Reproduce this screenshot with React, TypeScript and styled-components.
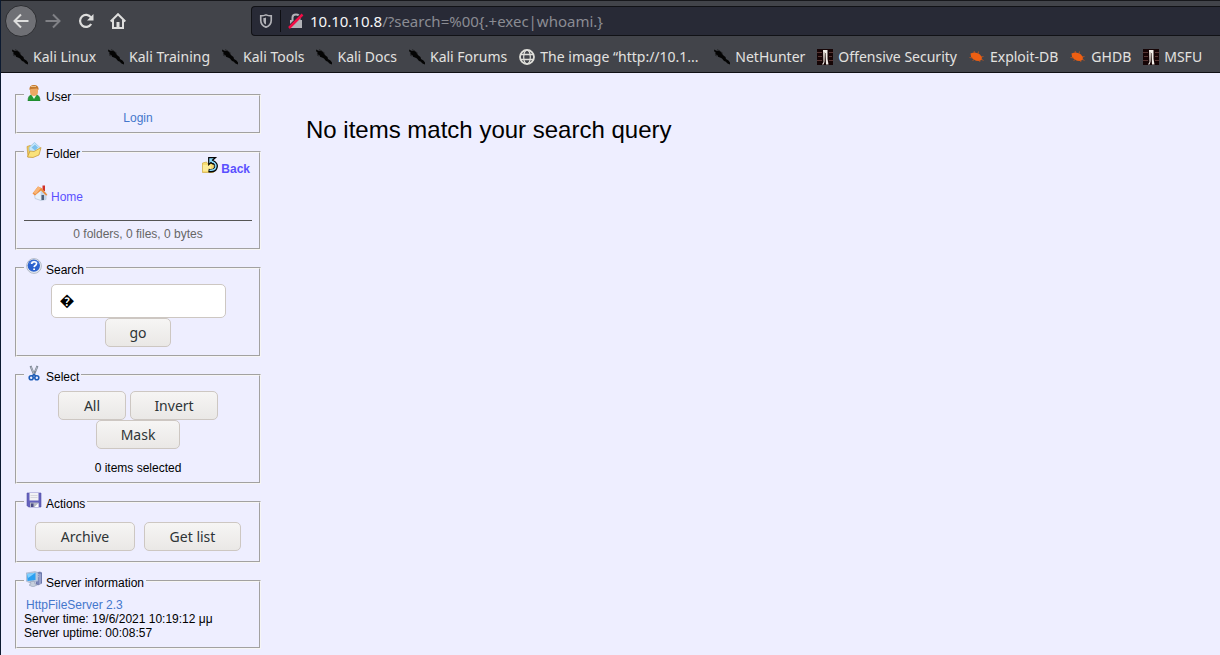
import React from "react";
import styled, { createGlobalStyle } from "styled-components";

const GlobalStyle = createGlobalStyle`
  * { box-sizing: border-box; }
  body {
    margin: 0;
    background: #eeeeff;
    color: #000;
    font: 12px/14px "Liberation Sans", Arial, sans-serif;
  }
  a { color: #4477cc; text-decoration: none; }
`;

const uiFont = `"Noto Sans", "Open Sans", sans-serif`;

const Window = styled.div`
  min-height: 100vh;
  border-left: 1px solid #0c1a30;
  overflow: hidden;
`;

const Chrome = styled.header`
  background: #42444a;
  border-top: 1px solid #17181c;
  border-bottom: 1px solid #0f1014;
  font-family: ${uiFont};
`;

const NavBar = styled.div`
  display: flex;
  align-items: center;
  height: 40px;
  padding-left: 4px;
`;

const NavButton = styled.button<{ $round?: boolean }>`
  display: grid;
  place-items: center;
  flex: none;
  width: 32px;
  height: 32px;
  padding: 0;
  border: 1px solid ${(p) => (p.$round ? "#2c2d31" : "transparent")};
  border-radius: 50%;
  background: ${(p) => (p.$round ? "#6f7075" : "none")};
  color: #dededd;
  &:disabled { color: #808186; }
`;

const NavButtons = styled.div`
  display: flex;
  flex: none;
  width: 129px;
  justify-content: space-between;
`;

const Address = styled.div`
  display: flex;
  align-items: center;
  flex: 1;
  height: 30px;
  margin-left: 117px;
  padding-left: 7px;
  border: 1px solid #111216;
  border-right: 0;
  border-radius: 4px 0 0 4px;
  background: #282a36;
  font-size: 15px;
  line-height: 20px;
  color: #8b8c93;
  white-space: pre;
`;

const Host = styled.span`
  color: #f6f6f7;
`;

const Divider = styled.span`
  width: 1px;
  height: 22px;
  margin: 0 7px;
  background: #0d0e12;
`;

const LockSlot = styled.span`
  display: flex;
  margin-right: 6px;
`;

const Bookmarks = styled.nav`
  display: flex;
  gap: 12px;
  height: 31px;
  padding: 0 11px;
  align-items: center;
`;

const Bookmark = styled.a`
  display: flex;
  flex: none;
  align-items: center;
  gap: 5px;
  color: #e2e2e0;
  font-size: 14px;
  line-height: 20px;
  white-space: nowrap;
`;

const BookmarkLabel = styled.span<{ $width?: number }>`
  width: ${(p) => (p.$width ? `${p.$width}px` : "auto")};
`;

const Page = styled.div`
  display: flex;
  align-items: flex-start;
`;

const Sidebar = styled.aside`
  display: flex;
  flex-direction: column;
  flex: none;
  gap: 8px;
  width: 246px;
  margin: 12px 0 6px 14px;
`;

const Panel = styled.fieldset`
  min-width: 0;
  margin: 0;
  padding: 0 7px 6px;
  border: 2px groove #f6f5f4;
`;

const PanelTitle = styled.legend`
  display: flex;
  align-items: flex-start;
  gap: 4px;
  height: 20px;
  padding: 0 2px;
  span { padding-top: 5px; }
`;

const Centered = styled.div<{ $top: number }>`
  padding-top: ${(p) => p.$top}px;
  padding-bottom: 1px;
  text-align: center;
`;

const IconLink = styled.a<{ $strong?: boolean }>`
  display: flex;
  align-items: flex-end;
  gap: 3px;
  color: #5a50ff;
  font-weight: ${(p) => (p.$strong ? "bold" : "normal")};
  span { margin-bottom: -3px; }
`;

const BackRow = styled.div`
  display: flex;
  justify-content: flex-end;
  margin-top: -5px;
  padding-right: 2px;
`;

const Trail = styled.div`
  display: flex;
  padding: 12px 8px 19px;
`;

const Summary = styled.div`
  padding: 6px 0 1px;
  border-top: 1px solid #555;
  color: #666;
  text-align: center;
`;

const SearchForm = styled.form`
  display: flex;
  flex-direction: column;
  align-items: center;
  padding: 6px 0 2px;
`;

const SearchInput = styled.input`
  width: 175px;
  height: 34px;
  padding: 0 8px 2px;
  border: 1px solid #cdc7c2;
  border-radius: 5px;
  background: #fff;
  color: #000;
  font: 15px/20px "Noto Sans", "DejaVu Sans", sans-serif;
`;

const Buttons = styled.div<{ $gap: number; $top: number; $bottom?: number }>`
  display: flex;
  flex-wrap: wrap;
  justify-content: center;
  column-gap: ${(p) => p.$gap}px;
  padding: ${(p) => p.$top}px 8px ${(p) => p.$bottom ?? 0}px;
`;

const Button = styled.button<{ $width: number }>`
  width: ${(p) => p.$width}px;
  height: 29px;
  padding: 0;
  border: 1px solid #cdc7c2;
  border-radius: 5px;
  background: linear-gradient(#f6f5f4, #eae8e6);
  color: #2e3436;
  font: 14px/20px ${uiFont};
`;

const ServerInfo = styled.div`
  padding: 7px 0 1px;
  a { margin-left: 2px; }
`;

const Message = styled.h1`
  margin: 43px 0 0 45px;
  font-size: 24px;
  line-height: 28px;
  font-weight: normal;
`;

const Icon = ({ size = 16, children }: { size?: number; children: React.ReactNode }) => (
  <svg width={size} height={size} viewBox="0 0 16 16" fill="none" aria-hidden="true">
    {children}
  </svg>
);

const KaliIcon = () => (
  <Icon>
    <path d="M0 .5l2.500 1.200H5l2 1 1 2L9.500 6.500l2 1.500.5 2 2.500 1.500 2 2.500-.5 1.500-2.500-1-2-2-1.500-.5L8 9.500 6 8.500 4 7.700l-.5-1.500L.8 5 2 4 .3 2.500z" fill="#040404" />
    <path d="M3 .5l3 1.500M7 3l2 1.500M1 6l2 1" stroke="#1c1c1e" strokeWidth=".7" />
  </Icon>
);

const GlobeIcon = () => (
  <Icon>
    <circle cx="8" cy="8" r="7" stroke="#deded9" strokeWidth="1.800" />
    <ellipse cx="8" cy="8" rx="3.300" ry="7" stroke="#deded9" strokeWidth="1.200" />
    <path d="M1.500 5.500h13M1.500 10.500h13" stroke="#deded9" strokeWidth="1.300" />
  </Icon>
);

const OffsecIcon = () => (
  <Icon>
    <path d="M0 0h16v16H0z" fill="#160506" />
    <path d="M0 3.500h5M1 7.500h4M0 11.500h5M12 3.500h4M12 7.500h3M12 11.500h4" stroke="#593634" />
    <path d="M6 1h4.500v9l1 5.500H9L8.500 4H8l-.5 9-1 2.500H5L6.500 13z" fill="#f3efe9" />
    <path d="M7.300 3v9" stroke="#a5978e" strokeWidth=".6" />
  </Icon>
);

const BugIcon = () => (
  <Icon>
    <path d="M1.500 4.500L4.500 3.500 8 4l3 1.500 2 3-.5 2.500-2.500 1-3-.3L4 10 2 7.500z" fill="#ee5f12" />
    <path d="M.5 8.500L4 9M3.500 12l2-2M5 2l1 2M9.500 2.500L9 5M12 8l2.500-.5M12 10l2.500 1.500M10 11l1 2" stroke="#d85a18" strokeWidth=".7" />
  </Icon>
);

const UserIcon = () => (
  <Icon>
    <path d="M2 16c0-4 1.500-6 4-6.500h4c2.500.5 4 2.500 4 6.500z" fill="#249a35" stroke="#157323" strokeWidth=".6" />
    <path d="M5.500 10L8 14l2.500-4z" fill="#e9f6e8" />
    <path d="M4 3c0-2 2-3 4-3s4 1 4 3v4c0 2.500-2 4-4 4S4 9.500 4 7z" fill="#eba964" />
    <path d="M3.500 5V3C4 1 6 0 8 0s4 1 4.500 3v2L11 3.500 5 4z" fill="#c47a2e" />
    <path d="M5 1.500h5" stroke="#eac08a" />
  </Icon>
);

const FolderIcon = () => (
  <Icon>
    <path d="M1 4.500l3-1 2 1 1 10-5 .5z" fill="#f0cb5c" stroke="#c4922c" strokeWidth=".6" />
    <path d="M3 5.500L8.500.5l5.500 5-2 6-8 1z" fill="#c6e6fa" stroke="#85b8dd" strokeWidth=".6" />
    <path d="M5.500 5.500l3.500-3 3 3-3 3z" fill="#7cc0ec" />
    <path d="M1.500 15L4 9l4 .5 7-4-2 7.500-6 2.500z" fill="#fae27a" stroke="#c4922c" strokeWidth=".7" />
  </Icon>
);

const BackIcon = () => (
  <Icon>
    <path d="M.5 15.500V6l4-1 1 1.500h6v9z" fill="#f7dc72" stroke="#ceaa3f" strokeWidth=".7" />
    <path d="M1 8h8v6H1z" fill="#fff1a8" opacity=".7" />
    <path d="M9 4.500c5 1 6 4 4.500 7-1 2-4 2.500-7 2" stroke="#050505" strokeWidth="3.600" />
    <path d="M13.500.7H6.700v7l2.300-2.200 2 1.500 1-2-1.500-1.800z" fill="#8cdcff" stroke="#050505" strokeWidth="1.200" />
    <path d="M10 4.500c4 1.500 4.500 4 3.500 6.500-.8 2-3.500 2.500-6 2.200" stroke="#8cdcff" strokeWidth="1.500" />
  </Icon>
);

const HomeIcon = () => (
  <Icon>
    <path d="M10.500.5H13V6h-2.500z" fill="#cf3028" />
    <path d="M2.500 8L8 3.500 14 8v6.500l-5 1L3 13.500z" fill="#e9f1fa" stroke="#a9bbd0" strokeWidth=".6" />
    <path d="M8.500 5.500L14 9v5.500l-5 1z" fill="#c3d5e9" />
    <path d="M.5 8.500L6 1.500 9.500 3l6 7-1.500.5-5-5L3 10.500z" fill="#ed8d3d" />
    <path d="M1 8L6 1.500 9 3 4 9z" fill="#f8b577" />
    <path d="M9.500 10H12v5H9.500z" fill="#50617b" />
  </Icon>
);

const HelpIcon = () => (
  <Icon>
    <circle cx="8" cy="8" r="7.400" fill="#e8ecf3" stroke="#a5adba" strokeWidth=".8" />
    <circle cx="7.800" cy="7.600" r="6.200" fill="#2c62ce" />
    <path d="M3 6c1-4 8-5 10 0-3-1-6-1-10 0z" fill="#5583df" />
    <path d="M5.700 6c0-3 4.800-3 4.800-.3 0 1.800-2.200 1.700-2.400 3.400" stroke="#fff" strokeWidth="1.600" />
    <path d="M7.200 10.500H9V12H7.200z" fill="#fff" />
  </Icon>
);

const ScissorsIcon = () => (
  <Icon>
    <path d="M4.500 1l4 9.500M11.500 1l-4 9.500" stroke="#7c8593" strokeWidth="2" />
    <path d="M5 2l3 7M11 2L9.500 6" stroke="#c6cdd8" strokeWidth=".7" />
    <circle cx="5.200" cy="12.800" r="2" stroke="#1b5bb8" strokeWidth="1.600" />
    <circle cx="10.800" cy="12.800" r="2" stroke="#1b5bb8" strokeWidth="1.600" />
    <path d="M6 11l2-1.500L10 11" stroke="#1b5bb8" strokeWidth="1.500" />
  </Icon>
);

const DiskIcon = () => (
  <Icon>
    <path d="M1 1h14v14H2.500L1 13.500z" fill="#6461bd" stroke="#5552aa" strokeWidth=".6" />
    <path d="M3.500 1h9v7.500h-9z" fill="#f2f2f5" />
    <path d="M4.500 3.500h7M4.500 5.500h7" stroke="#cfcfd6" strokeWidth=".8" />
    <path d="M4 10.500h8.500V15H4z" fill="#b4b7c3" />
    <path d="M5 11.500h2.500V15H5z" fill="#4a4a86" />
    <path d="M8.500 15l4-4v4z" fill="#fff" />
  </Icon>
);

const ServerIcon = () => (
  <Icon>
    <path d="M10 2l4-1 2 1v10l-4 2-2-1z" fill="#7884ba" stroke="#596594" strokeWidth=".6" />
    <path d="M14 3v10M11 4l2-.5M11 6l2-.5" stroke="#c4cbe4" strokeWidth=".8" />
    <path d="M0 2l9-1.500 3 1V10l-8 2-4-2z" fill="#bbc9de" stroke="#9aa9c4" strokeWidth=".5" />
    <path d="M1 3l8.500-1.300V9L1.500 10z" fill="#2da0f1" />
    <path d="M1 3l8.500-1.300L2 7z" fill="#83d0ff" />
    <path d="M4 11l4-1 1 3 2 1-4 2-4-2 2-1z" fill="#c6cfdd" stroke="#8493aa" strokeWidth=".5" />
  </Icon>
);

const bookmarks = [
  { label: "Kali Linux", icon: <KaliIcon /> },
  { label: "Kali Training", icon: <KaliIcon /> },
  { label: "Kali Tools", icon: <KaliIcon /> },
  { label: "Kali Docs", icon: <KaliIcon /> },
  { label: "Kali Forums", icon: <KaliIcon /> },
  { label: "The image “http://10.1...", icon: <GlobeIcon />, width: 162 },
  { label: "NetHunter", icon: <KaliIcon /> },
  { label: "Offensive Security", icon: <OffsecIcon /> },
  { label: "Exploit-DB", icon: <BugIcon /> },
  { label: "GHDB", icon: <BugIcon /> },
  { label: "MSFU", icon: <OffsecIcon /> },
];

const Title = ({ icon, children }: { icon: React.ReactNode; children: string }) => (
  <PanelTitle>
    {icon}
    <span>{children}</span>
  </PanelTitle>
);

export default function App() {
  return (
    <Window>
      <GlobalStyle />
      <Chrome>
        <NavBar>
          <NavButtons>
            <NavButton $round aria-label="Back">
              <Icon>
                <path d="M15.500 8H1.500M8 1.500L1.500 8 8 14.500" stroke="currentColor" strokeWidth="2" />
              </Icon>
            </NavButton>
            <NavButton disabled aria-label="Forward">
              <Icon>
                <path d="M.5 8h14M8 1.500L14.500 8 8 14.500" stroke="currentColor" strokeWidth="2" />
              </Icon>
            </NavButton>
            <NavButton aria-label="Reload">
              <Icon>
                <path d="M13.200 11A6 6 0 1 1 13 4.500" stroke="currentColor" strokeWidth="2.200" />
                <path d="M15.500 1v6.500H9z" fill="currentColor" />
              </Icon>
            </NavButton>
            <NavButton aria-label="Home">
              <Icon>
                <path d="M.7 8.500L8 1.200l7.300 7.300M3 7v8h10V7" stroke="currentColor" strokeWidth="2" />
                <path d="M6.500 9h3v5h-3z" fill="currentColor" />
              </Icon>
            </NavButton>
          </NavButtons>
          <Address>
            <Icon size={14}>
              <path d="M8 1c2 1 4 1.200 6 1.200V7c0 4-2 6.500-6 8-4-1.500-6-4-6-8V2.200C4 2.200 6 2 8 1z" stroke="#b2b2b7" strokeWidth="1.900" />
              <path d="M8 4c-1 .5-2 .7-3 .7V7c0 2.500 1 4 3 5z" fill="#b2b2b7" />
            </Icon>
            <Divider />
            <LockSlot>
              <Icon>
                <path d="M2 7h12v8H2z" fill="#b2b2b7" />
                <path d="M4.500 7V4.500c0-4 7-4 7 0V7" stroke="#b2b2b7" strokeWidth="2" />
                <path d="M1 13L13 1" stroke="#282a36" strokeWidth="1.500" />
                <path d="M1 15L14.500 1.500" stroke="#f20d45" strokeWidth="2.500" />
              </Icon>
            </LockSlot>
            <Host>10.10.10.8</Host>
            <span>{"/?search=%00{.+exec|whoami.}"}</span>
          </Address>
        </NavBar>
        <Bookmarks>
          {bookmarks.map((b) => (
            <Bookmark href="#" key={b.label}>
              {b.icon}
              <BookmarkLabel $width={b.width}>{b.label}</BookmarkLabel>
            </Bookmark>
          ))}
        </Bookmarks>
      </Chrome>
      <Page>
        <Sidebar>
          <Panel>
            <Title icon={<UserIcon />}>User</Title>
            <Centered $top={6}>
              <a href="#">Login</a>
            </Centered>
          </Panel>
          <Panel>
            <Title icon={<FolderIcon />}>Folder</Title>
            <BackRow>
              <IconLink href="#" $strong>
                <BackIcon />
                <span>Back</span>
              </IconLink>
            </BackRow>
            <Trail>
              <IconLink href="#">
                <HomeIcon />
                <span>Home</span>
              </IconLink>
            </Trail>
            <Summary>0 folders, 0 files, 0 bytes</Summary>
          </Panel>
          <Panel>
            <Title icon={<HelpIcon />}>Search</Title>
            <SearchForm onSubmit={(e) => e.preventDefault()}>
              <SearchInput aria-label="Search" defaultValue={"\uFFFD"} />
              <Button $width={66}>go</Button>
            </SearchForm>
          </Panel>
          <Panel>
            <Title icon={<ScissorsIcon />}>Select</Title>
            <Buttons $gap={4} $top={6}>
              <Button $width={68}>All</Button>
              <Button $width={88}>Invert</Button>
              <Button $width={84}>Mask</Button>
            </Buttons>
            <Centered $top={12}>0 items selected</Centered>
          </Panel>
          <Panel>
            <Title icon={<DiskIcon />}>Actions</Title>
            <Buttons $gap={9} $top={10} $bottom={4}>
              <Button $width={100}>Archive</Button>
              <Button $width={97}>Get list</Button>
            </Buttons>
          </Panel>
          <Panel>
            <Title icon={<ServerIcon />}>Server information</Title>
            <ServerInfo>
              <a href="#">HttpFileServer 2.3</a>
              <div>Server time: 19/6/2021 10:19:12 μμ</div>
              <div>Server uptime: 00:08:57</div>
            </ServerInfo>
          </Panel>
        </Sidebar>
        <main>
          <Message>No items match your search query</Message>
        </main>
      </Page>
    </Window>
  );
}
